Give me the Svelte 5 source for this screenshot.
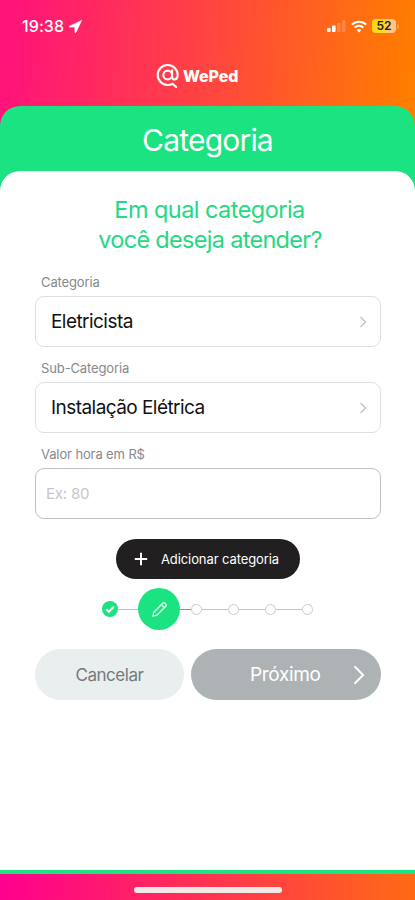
<script>
  let fields = [
    { label: 'Categoria', value: 'Eletricista' },
    { label: 'Sub-Categoria', value: 'Instalação Elétrica' }
  ];
  let valor = '';
  let pending = [1, 2, 3, 4];
</script>

<div class="screen">
  <div class="status">
    <div class="time">
      <span>19:38</span>
      <svg width="13" height="13" viewBox="0 0 13 13"><path d="M12.6.4.5 6.2c-.6.3-.4.9.2.9h5.2v5.2c0 .6.7.7 1 .2z" fill="#fff" stroke="#fff" stroke-width=".6" /></svg>
    </div>
    <div class="signals">
      <svg width="19" height="12" viewBox="0 0 19 12" fill="#fff">
        <rect x="0" y="8" width="3.6" height="4" rx="1" />
        <rect x="5" y="5.6" width="3.6" height="6.4" rx="1" />
        <rect x="10" y="3" width="3.6" height="9" rx="1" opacity=".2" />
        <rect x="15" y="0" width="3.6" height="12" rx="1" opacity=".2" />
      </svg>
      <svg class="wifi" width="16" height="13" viewBox="0 0 16 13" fill="none" stroke="#fff" stroke-width="2">
        <path d="M.9 4.6a10.2 10.2 0 0 1 14.2 0" />
        <path d="M3.6 7.6a6.3 6.3 0 0 1 8.8 0" />
        <path d="M8 12.6 5.6 10a3.6 3.6 0 0 1 4.8 0z" fill="#fff" stroke="none" />
      </svg>
      <div class="battery">52</div>
      <div class="tip"></div>
    </div>
  </div>

  <div class="brand">
    <svg width="24" height="26" viewBox="0 0 24 26" fill="none" stroke="#fff" stroke-linecap="round">
      <path d="M16 13.5c0 4.3 5.7 4 5.7-1.5A10 10 0 1 0 11.7 22q2.6 0 4.8-1.2L20.2 24" stroke-width="2.1" />
      <circle cx="11.7" cy="12" r="4.4" stroke-width="2.1" />
      <path d="M16.1 7.2v6.3" stroke-width="2.1" />
    </svg>
    <span>WePed</span>
  </div>

  <div class="panel">
    <h1>Categoria</h1>
    <div class="content">
      <h2>Em qual categoria<br /><span class="second">você deseja atender?</span></h2>

      {#each fields as field}
        <div class="field">
          <label for={field.label}>{field.label}</label>
          <button class="select" id={field.label}>
            <span>{field.value}</span>
            <svg width="8" height="12" viewBox="0 0 8 12"><path d="M1.5 1 6.5 6l-5 5" fill="none" stroke="#c2c4c4" stroke-width="1.4" /></svg>
          </button>
        </div>
      {/each}
      <div class="field last">
        <label for="valor">Valor hora em R$</label>
        <input id="valor" placeholder="Ex: 80" bind:value={valor} />
      </div>

      <button class="add">
        <svg width="14" height="14" viewBox="0 0 14 14"><path d="M7 .8v12.4M.8 7h12.4" stroke="#fff" stroke-width="2" /></svg>
        <span>Adicionar categoria</span>
      </button>

      <div class="steps">
        <svg width="16" height="16" viewBox="0 0 16 16">
          <circle cx="8" cy="8" r="8" fill="#1be381" />
          <path d="m4.2 8.2 2.7 2.6 4.9-5" fill="none" stroke="#fff" stroke-width="2.2" />
        </svg>
        <div class="line green"></div>
        <div class="current">
          <svg width="17" height="17" viewBox="0 0 18 18" fill="none" stroke="#d9fbe9" stroke-width="1.5" stroke-linejoin="round">
            <path d="M2 16 3 11.8 12.4 2.4q1.2-1.1 2.4 0l.8.8q1.2 1.2 0 2.4L6.2 15z" />
            <path d="m11 3.9 3.1 3.1" />
          </svg>
        </div>
        {#each pending as step}
          <div class="line" class:first={step === 1}></div>
          <div class="dot"></div>
        {/each}
      </div>

      <div class="actions">
        <button class="cancel">Cancelar</button>
        <button class="next">
          <span>Próximo</span>
          <svg width="12" height="20" viewBox="0 0 12 20"><path d="m1.5 1.2 8.6 8.8-8.6 8.8" fill="none" stroke="#fff" stroke-width="2" /></svg>
        </button>
      </div>
    </div>
  </div>

  <div class="bottom">
    <div class="home"></div>
  </div>
</div>

<style>
  :global(body) {
    margin: 0;
  }
  .screen {
    width: 415px;
    height: 900px;
    display: flex;
    flex-direction: column;
    overflow: hidden;
    font-family: Inter, "Liberation Sans", sans-serif;
    background: linear-gradient(94deg, #ff1479 3%, #ff4540 50%, #ff7d00 97%) top / 100% 190px no-repeat;
  }
  button, input {
    font-family: inherit;
    box-sizing: border-box;
    border: none;
    padding: 0;
  }
  svg {
    display: block;
    flex: none;
  }
  .status {
    display: flex;
    justify-content: space-between;
    height: 52px;
    box-sizing: border-box;
    padding: 0 16px 0 22px;
    align-items: center;
  }
  .time {
    display: flex;
    align-items: center;
    gap: 5px;
    color: #fff;
    font-size: 16px;
    font-weight: 500;
    letter-spacing: 0.1px;
  }
  .signals {
    display: flex;
    align-items: center;
  }
  .wifi {
    margin: 0 5px 0 5px;
  }
  .battery {
    width: 24px;
    height: 14px;
    border-radius: 4px;
    background: linear-gradient(to right, #fbd81c 53%, #fbc686 53%);
    color: #2b1c08;
    font-size: 12px;
    font-weight: 600;
    line-height: 14px;
    text-align: center;
  }
  .tip {
    width: 2px;
    height: 5px;
    margin-left: 1px;
    border-radius: 0 2px 2px 0;
    background: #fba566;
  }
  .brand {
    height: 54px;
    box-sizing: border-box;
    padding: 11px 0 0 156px;
    display: flex;
    align-items: flex-start;
    gap: 3px;
    color: #fff;
    font-size: 16px;
    font-weight: 800;
    letter-spacing: -0.1px;
    line-height: 26px;
  }
  .panel {
    height: 764px;
    display: flex;
    flex-direction: column;
    border-radius: 20px 20px 0 0;
    background: #1be381;
  }
  h1 {
    margin: 0;
    height: 65px;
    line-height: 68px;
    text-align: center;
    color: #fff;
    font-size: 30px;
    font-weight: 400;
    letter-spacing: -0.8px;
  }
  .content {
    flex: 1;
    border-radius: 20px 20px 0 0;
    background: #fff;
    padding: 24px 35px 0;
  }
  h2 {
    margin: 0 0 18px 4px;
    text-align: center;
    color: #24d983;
    font-size: 23.5px;
    line-height: 30px;
    font-weight: 400;
    letter-spacing: -0.55px;
  }
  h2 .second {
    letter-spacing: -0.7px;
    padding-left: 1px;
  }
  .field {
    height: 86px;
  }
  .field.last {
    height: 80px;
  }
  label {
    display: block;
    height: 23px;
    padding-left: 6px;
    line-height: 18px;
    font-size: 13px;
    letter-spacing: -0.12px;
    color: #85898b;
  }
  .select, input {
    width: 346px;
    height: 51px;
    border: 1px solid #dfe0e0;
    border-radius: 9px;
    background: #fff;
  }
  .select {
    display: flex;
    align-items: center;
    justify-content: space-between;
    padding: 0 13px 0 15px;
    font-size: 19px;
    color: #111;
    letter-spacing: -0.55px;
  }
  input {
    display: block;
    padding-left: 10px;
    font-size: 15px;
    letter-spacing: -0.2px;
    border-color: #bfc1c1;
  }
  input::placeholder {
    color: #c6c7c7;
  }
  .add {
    display: flex;
    align-items: center;
    width: 184px;
    height: 40px;
    margin: 14px 0 0 81px;
    padding-left: 18px;
    gap: 13px;
    border-radius: 20px;
    background: #211f1f;
    color: #fff;
    font-size: 13px;
    letter-spacing: -0.1px;
    white-space: nowrap;
  }
  .steps {
    display: flex;
    align-items: center;
    height: 42px;
    margin: 9px 0 0 67px;
  }
  .current {
    width: 42px;
    height: 42px;
    border-radius: 50%;
    background: #1be381;
    display: flex;
    align-items: center;
    justify-content: center;
  }
  .line {
    width: 26px;
    height: 1px;
    background: #c0c4c5;
  }
  .line.green {
    width: 20px;
    background: #7beab2;
  }
  .line.first {
    width: 11px;
    background: #8f9495;
  }
  .dot {
    box-sizing: border-box;
    width: 11px;
    height: 11px;
    border: 1.5px solid #c8cccd;
    border-radius: 50%;
  }
  .actions {
    display: flex;
    gap: 7px;
    margin-top: 19px;
    width: 346px;
  }
  .cancel {
    width: 149px;
    height: 51px;
    border-radius: 26px;
    background: #e9eeef;
    color: #747a7d;
    font-size: 17px;
    font-weight: 400;
    letter-spacing: -0.45px;
  }
  .next {
    display: flex;
    align-items: center;
    justify-content: space-between;
    width: 190px;
    height: 51px;
    padding: 0 16px 0 59px;
    border-radius: 26px;
    background: #adb3b5;
    color: #fff;
    font-size: 19px;
    font-weight: 400;
    letter-spacing: -0.35px;
  }
  .bottom {
    height: 30px;
    box-sizing: border-box;
    border-top: 4px solid #1be381;
    display: flex;
    justify-content: center;
    background: linear-gradient(to right, #ff008e, #ff2d57 45%, #ff6a15);
  }
  .home {
    width: 148px;
    height: 6px;
    margin-top: 13px;
    border-radius: 3px;
    background: #f5e9e7;
  }
</style>
